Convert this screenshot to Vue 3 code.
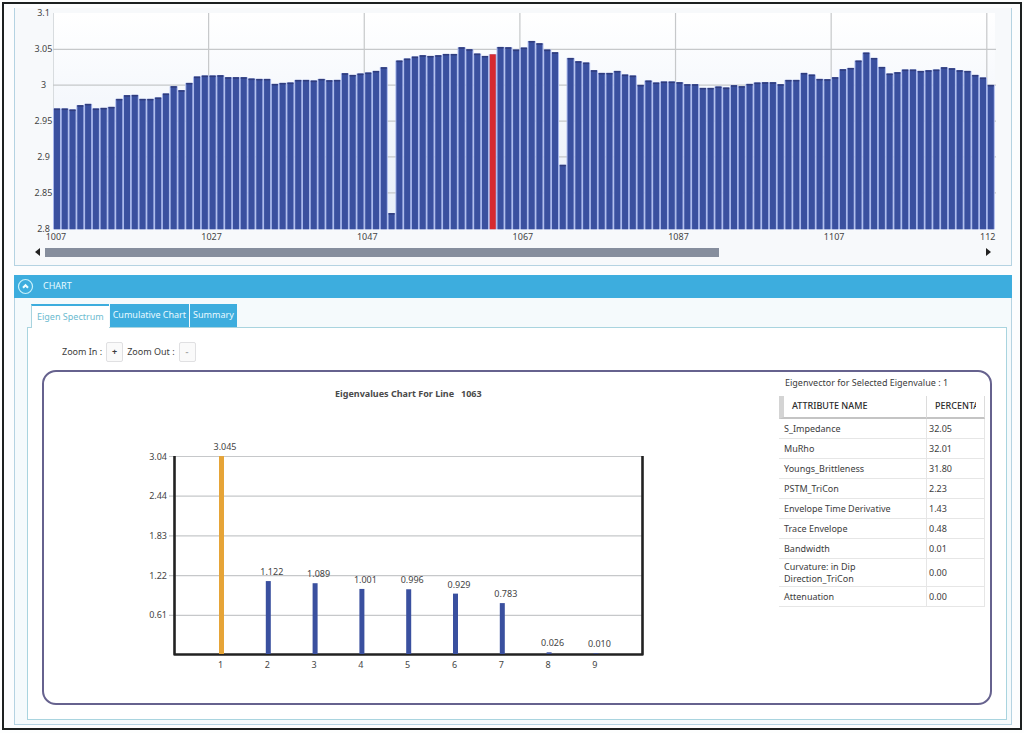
<script setup>
import { ref } from 'vue'

const slot = 7.79
const plotLeft = 53
const baseline = 229.5

// Heights of the bars for lines 1007 to 1127, in thirds of a chart unit below the top edge.
const tops = [
  326, 326, 329, 316, 312, 326, 324, 321, 297, 286, 285, 297, 297, 293, 281, 259, 271, 249, 230, 227,
  227, 226, 232, 232, 232, 236, 237, 237, 252, 249, 248, 240, 240, 242, 237, 241, 240, 220, 225, 221,
  218, 213, 202, 640, 182, 176, 170, 166, 168, 166, 162, 162, 142, 148, 161, 168, 163, 141, 142, 149,
  143, 123, 130, 149, 157, 495, 174, 184, 188, 211, 219, 219, 213, 224, 227, 255, 242, 248, 245, 245,
  247, 253, 253, 264, 264, 260, 263, 256, 259, 252, 248, 247, 247, 253, 240, 240, 219, 224, 237, 238,
  232, 208, 204, 182, 158, 174, 201, 221, 217, 209, 209, 213, 211, 209, 202, 205, 211, 213, 225, 233,
  255
]
const bars = tops.map((t, i) => ({
  line: 1007 + i,
  x: plotLeft + 1 + i * slot,
  y: t / 3,
  h: baseline - t / 3
}))
const levels = ['3.1', '3.05', '3', '2.95', '2.9', '2.85', '2.8'].map((label, i) => ({
  label,
  y: 13.5 + i * 35.9
}))
const lines = ['1007', '1027', '1047', '1067', '1087', '1107', '112'].map((label, i) => ({
  label,
  x: plotLeft + i * slot * 20
}))

const eigen = ['3.045', '1.122', '1.089', '1.001', '0.996', '0.929', '0.783', '0.026', '0.010'].map((v, i) => {
  const h = Number(v) * 65
  return { value: v, index: i + 1, x: 221.5 + i * 46.8, y: 654 - h, h }
})
const eigenTicks = ['3.04', '2.44', '1.83', '1.22', '0.61'].map((label, i) => ({
  label,
  y: 456.5 + i * 39.7
}))

const tabs = ['Eigen Spectrum', 'Cumulative Chart', 'Summary']
const active = ref(0)

const rows = [
  ['S_Impedance', '32.05'],
  ['MuRho', '32.01'],
  ['Youngs_Brittleness', '31.80'],
  ['PSTM_TriCon', '2.23'],
  ['Envelope Time Derivative', '1.43'],
  ['Trace Envelope', '0.48'],
  ['Bandwidth', '0.01'],
  ['Curvature: in Dip Direction_TriCon', '0.00'],
  ['Attenuation', '0.00']
]
</script>

<template>
  <main class="frame">
    <section class="overview">
      <svg class="chart" viewBox="15 8 997 236" role="img" aria-label="Eigenvalue by line">
        <defs>
          <linearGradient id="plot" x1="0" y1="0" x2="0" y2="1">
            <stop offset="0" stop-color="#ffffff" />
            <stop offset="1" stop-color="#e6edf8" />
          </linearGradient>
        </defs>
        <rect x="53" y="13" width="943" height="216" fill="url(#plot)" />
        <path d="M53.5 13V229" stroke="#d8dcdf" />
        <g class="grid">
          <path v-for="l in levels.slice(1, 6)" :key="l.label" :d="`M53 ${l.y}H997`" />
          <path v-for="l in lines.slice(1)" :key="l.label" :d="`M${l.x} 13V229`" />
        </g>
        <rect v-for="b in bars" :key="b.line" class="halo" :x="b.x - 1" :y="b.y" width="8" :height="b.h" />
        <g v-for="b in bars" :key="b.line">
          <rect :class="b.line === 1063 ? 'picked' : 'bar'" :x="b.x" :y="b.y" width="6" :height="b.h" />
          <rect v-if="b.line !== 1063" class="cap" :x="b.x" :y="b.y" width="6" height="1.5" />
        </g>
        <text v-for="l in levels" :key="l.label" x="43.5" :y="l.y + 3" class="mid">{{ l.label }}</text>
        <text v-for="(l, i) in lines" :key="l.label" :x="l.x + (i === 6 ? 1 : 3)" y="240" class="mid">{{ l.label }}</text>
      </svg>
      <div class="scroll">
        <button type="button" aria-label="Scroll left">
          <svg width="5" height="8" viewBox="0 0 5 8"><path d="M5 0V8L0 4Z" fill="#222" /></svg>
        </button>
        <div class="track"><div class="thumb"></div></div>
        <button type="button" aria-label="Scroll right">
          <svg width="5" height="8" viewBox="0 0 5 8"><path d="M0 0V8L5 4Z" fill="#222" /></svg>
        </button>
      </div>
    </section>

    <section class="details">
      <header class="bar-head">
        <button type="button" class="collapse" aria-label="Collapse chart">
          <svg width="17" height="17" viewBox="0 0 17 17" fill="none" stroke="#c9f1fb">
            <circle cx="8.5" cy="8.5" r="7" stroke-width="1.2" />
            <path d="M6 9.8L8.5 7.2L11 9.8" stroke="#f0fdff" stroke-width="2" />
          </svg>
        </button>
        <h2>CHART</h2>
      </header>
      <div class="body">
        <nav class="tabs" role="tablist">
          <button
            v-for="(t, i) in tabs"
            :key="t"
            type="button"
            role="tab"
            :aria-selected="active === i"
            :class="{ on: active === i }"
            @click="active = i"
          >{{ t }}</button>
        </nav>
        <div class="pane">
          <div class="zoom">
            <label for="zin">Zoom In :</label>
            <button id="zin" type="button">+</button>
            <label for="zout">Zoom Out :</label>
            <button id="zout" type="button" class="dim">-</button>
          </div>
          <div class="card">
            <div class="plot">
              <svg class="chart" viewBox="44 372 735 331" role="img" aria-label="Eigenvalues chart">
                <text x="335" y="397" class="title">Eigenvalues Chart For Line</text>
                <text x="461" y="397" class="title">1063</text>
                <g class="grid">
                  <path v-for="t in eigenTicks" :key="t.label" :d="`M169 ${t.y}H643`" />
                </g>
                <path d="M174.5 456V654.5H642.5V456" fill="none" stroke="#222" stroke-width="2.6" stroke-linejoin="round" />
                <g v-for="e in eigen" :key="e.index">
                  <rect :class="e.index === 1 ? 'gold' : 'bar'" :x="e.x - 2.5" :y="e.y" width="5" :height="e.h" />
                  <text :x="e.x + 3.5" :y="e.y - 6" class="mid">{{ e.value }}</text>
                  <text :x="e.x - 1" y="668" class="mid">{{ e.index }}</text>
                </g>
                <text v-for="t in eigenTicks" :key="t.label" x="167" :y="t.y + 3" class="end">{{ t.label }}</text>
              </svg>
            </div>
            <aside>
              <p>Eigenvector for Selected Eigenvalue : 1</p>
              <table>
                <thead>
                  <tr><th>ATTRIBUTE NAME</th><th><div>PERCENTAGE</div></th></tr>
                </thead>
                <tbody>
                  <tr v-for="r in rows" :key="r[0]"><td><div>{{ r[0] }}</div></td><td>{{ r[1] }}</td></tr>
                </tbody>
              </table>
            </aside>
          </div>
        </div>
      </div>
    </section>
  </main>
</template>

<style>
body {
  background: #fdfefe;
}
</style>

<style scoped>
* {
  box-sizing: border-box;
}
.frame {
  margin: 2px 2px 0;
  padding: 4px 8px 3px 10px;
  border: 2px solid #1c2020;
  background: #fcfdfe;
  font-family: "Noto Sans", "Open Sans", sans-serif;
  font-size: 9px;
  line-height: 12px;
  color: #3c3c3c;
}
button {
  font: inherit;
  color: inherit;
  padding: 0;
  border: 0;
  background: none;
}
.overview {
  background: #f7f9fb;
  border: 1px solid #b5d3e2;
  border-top: 0;
  padding-bottom: 4px;
}
.chart {
  display: block;
  width: 100%;
  height: auto;
}
.chart text {
  fill: #444;
  font-size: 9px;
}
.chart .mid {
  text-anchor: middle;
}
.chart .end {
  text-anchor: end;
}
.chart .title {
  font-weight: 700;
  font-size: 9px;
  fill: #4a4a4a;
}
.grid path {
  stroke: #c6c8ca;
  stroke-width: 1.2;
}
.halo {
  fill: #a9b8ec;
}
.bar {
  fill: #3a509f;
}
.cap {
  fill: #303c7c;
}
.picked {
  fill: #d62a30;
}
.gold {
  fill: #e6a437;
}
.scroll {
  display: flex;
  align-items: center;
  height: 17px;
  padding: 0 20px;
  gap: 5px;
}
.scroll button {
  display: flex;
}
.track {
  flex: 1;
}
.thumb {
  width: 72%;
  height: 9px;
  background: #868e9d;
}
.details {
  margin-top: 9px;
}
.bar-head {
  display: flex;
  align-items: center;
  gap: 9px;
  height: 23px;
  padding-left: 3px;
  background: #3dadde;
  color: #e8fbff;
}
.collapse {
  display: flex;
}
h2 {
  margin: 0;
  font-size: 9px;
  font-weight: 400;
}
.body {
  padding: 6px 4px 4px 12px;
  border: 1px solid #b5d3e2;
  border-top: 0;
  background: #f5fafc;
}
.tabs {
  display: flex;
  gap: 1px;
  padding-left: 4px;
}
.tabs button {
  height: 23px;
  padding: 0 3px;
  background: #3dadde;
  color: #eafaff;
}
.tabs .on {
  height: 24px;
  margin-bottom: -1px;
  padding: 0 5px;
  position: relative;
  background: #fff;
  color: #6dbbd0;
  border-top: 2px solid #3dadde;
  border-left: 1px solid #a9d4df;
}
.pane {
  padding: 14px 14px;
  border: 1px solid #a9d4df;
  background: #fff;
}
.zoom {
  display: flex;
  align-items: center;
  gap: 4px;
  padding: 0 0 8px 20px;
}
.zoom button {
  width: 17px;
  height: 20px;
  border: 1px solid #e0e0e2;
  border-radius: 2px;
  background: #fafafa;
  font-weight: 700;
}
.zoom .dim {
  color: #aaa;
}
.card {
  display: flex;
  border: 2px solid #66628e;
  border-radius: 14px;
  background: #fff;
}
.plot {
  flex: 1;
  min-width: 0;
}
aside {
  width: 211px;
  padding: 5px 5px 0 0;
}
aside p {
  margin: 0 0 7px;
  padding-left: 6px;
}
table {
  width: 100%;
  table-layout: fixed;
  border-collapse: separate;
  border-spacing: 0;
}
th {
  height: 23px;
  padding: 0 8px;
  text-align: left;
  font-weight: 500;
  color: #2c2c2c;
  border-bottom: 2px solid #c4c4c4;
  border-right: 1px solid #dcdcdc;
}
th div {
  overflow: hidden;
}
th:first-child {
  width: 148px;
  border-left: 5px solid #d4d4d4;
}
td {
  height: 20px;
  padding: 2px 0 1px 2px;
  border-bottom: 1px solid #e6e6e6;
  border-right: 1px solid #e6e6e6;
}
td:first-child {
  padding-left: 5px;
}
td:first-child div {
  max-width: 120px;
}
</style>
